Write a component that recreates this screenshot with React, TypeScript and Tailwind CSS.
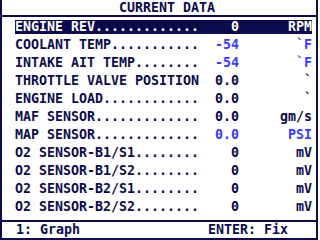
const rows = [
  { label: "ENGINE REV", value: "0", unit: "RPM", active: true },
  { label: "COOLANT TEMP", value: "-54", unit: "`F", blue: true },
  { label: "INTAKE AIT TEMP", value: "-54", unit: "`F", blue: true },
  { label: "THROTTLE VALVE POSITION", value: "0.0", unit: "`" },
  { label: "ENGINE LOAD", value: "0.0", unit: "`" },
  { label: "MAF SENSOR", value: "0.0", unit: "gm/s" },
  { label: "MAP SENSOR", value: "0.0", unit: "PSI", blue: true },
  { label: "O2 SENSOR-B1/S1", value: "0", unit: "mV" },
  { label: "O2 SENSOR-B1/S2", value: "0", unit: "mV" },
  { label: "O2 SENSOR-B2/S1", value: "0", unit: "mV" },
  { label: "O2 SENSOR-B2/S2", value: "0", unit: "mV" },
];

const pad = (s: string) => s + ".".repeat(Math.max(0, 23 - s.length));

export default function App() {
  return (
    <div className="w-[320px] h-[240px] bg-white overflow-hidden">
      <div
        className="w-[318px] h-[240px] flex flex-col border-l-2 border-r-2 border-b-2 border-[#0c0c4c] text-[#0c0c4c] font-bold text-[13.3px] leading-none whitespace-pre"
        style={{ fontFamily: '"DejaVu Sans Mono", monospace' }}
      >
        <div className="h-[15px] flex items-center justify-center pl-[16px]">CURRENT DATA</div>
        <div className="h-[2px] bg-[#0c0c4c]" />
        <div className="flex flex-col pt-[3px] h-[203px]">
          {rows.map((r) => (
            <div key={r.label} className="h-[18px]">
              <div
                className={`ml-[13px] w-[297px] h-[14px] flex items-end pb-[1px] ${
                  r.active ? "bg-[#0c0c4c] text-white" : ""
                }`}
              >
                <span className="w-[184px]">{pad(r.label)}</span>
                <span className={`w-[40px] text-right ${r.blue ? "text-[#3c3cf5]" : ""}`}>{r.value}</span>
                <span className={`w-[73px] text-right ${r.blue ? "text-[#3c3cf5]" : ""}`}>{r.unit}</span>
              </div>
            </div>
          ))}
        </div>
        <div className="h-[2px] bg-[#0c0c4c]" />
        <div className="flex-1 flex items-center">
          <span className="ml-[14px]">1: Graph</span>
          <span className="ml-[128px]">ENTER: Fix</span>
        </div>
      </div>
    </div>
  );
}
